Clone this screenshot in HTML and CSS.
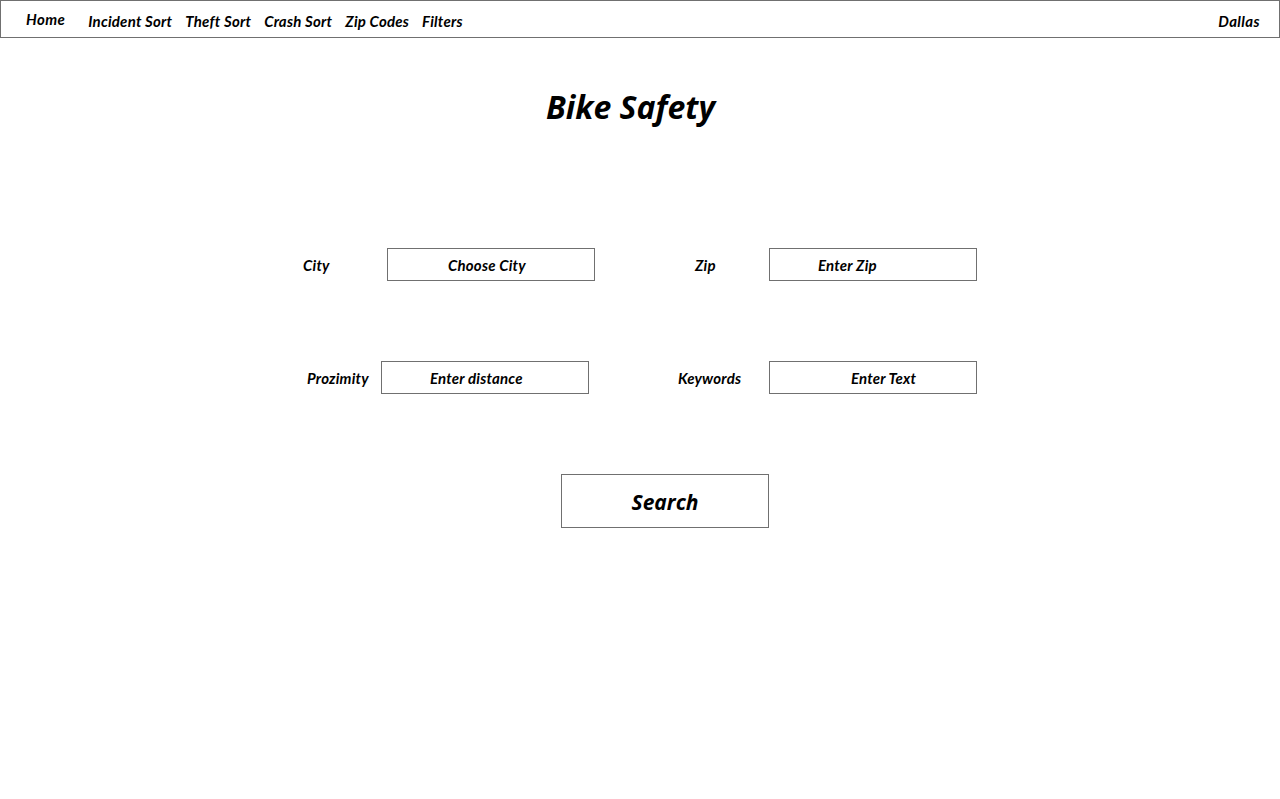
FILE: index.html
```html
<!DOCTYPE html>
<html lang="en">
<head>
<meta charset="utf-8">
<title>Bike Safety</title>
<link rel="stylesheet" href="styles.css">
</head>
<body>
<nav class="topbar">
  <a class="nav-home" href="#">Home</a>
  <ul class="nav-links">
    <li><a href="#">Incident Sort</a></li>
    <li><a href="#">Theft Sort</a></li>
    <li><a href="#">Crash Sort</a></li>
    <li><a href="#">Zip Codes</a></li>
    <li><a href="#">Filters</a></li>
  </ul>
  <span class="nav-city">Dallas</span>
</nav>

<main class="page">
  <h1 class="title">Bike Safety</h1>

  <form class="search-form">
    <div class="row row-1">
      <label class="label label-city">City</label>
      <div class="box box-city">Choose City</div>
      <label class="label label-zip">Zip</label>
      <div class="box box-zip">Enter Zip</div>
    </div>
    <div class="row row-2">
      <label class="label label-prox">Prozimity</label>
      <div class="box box-dist">Enter distance</div>
      <label class="label label-key">Keywords</label>
      <div class="box box-text">Enter Text</div>
    </div>
    <div class="row row-btn">
      <button type="button" class="search-btn">Search</button>
    </div>
  </form>
</main>
</body>
</html>
```

FILE: styles.css
```css
* { box-sizing: border-box; }

html, body {
  margin: 0;
  padding: 0;
  background: #ffffff;
  color: #000000;
}

body {
  width: 1280px;
  height: 799px;
  overflow: hidden;
  font-family: Lato, "Open Sans", sans-serif;
  font-weight: 700;
  font-style: italic;
}

a { color: #000; text-decoration: none; }

.topbar {
  height: 38px;
  border: 1px solid #707070;
  display: flex;
  align-items: center;
  padding: 3px 19px 0 25px;
  font-size: 15px;
  letter-spacing: 0.22px;
}

.nav-home {
  margin-top: -3px;
  letter-spacing: 0.4px;
}

.nav-links {
  list-style: none;
  display: flex;
  gap: 13px;
  margin: 0 0 0 23px;
  padding: 0;
}

.nav-city {
  margin-left: auto;
  letter-spacing: 0.4px;
}

.page {
  display: flex;
  flex-direction: column;
}

.title {
  margin: 47px 0 0 0;
  text-align: center;
  font-family: "Open Sans", sans-serif;
  font-size: 32px;
  font-weight: 700;
  font-style: italic;
  line-height: 44px;
  padding-right: 19px;
  letter-spacing: 0;
}

.search-form {
  display: flex;
  flex-direction: column;
}

.row {
  display: flex;
  align-items: center;
}

.row-1 { margin-top: 119px; }
.row-2 { margin-top: 80px; }
.row-btn { margin-top: 80px; padding-left: 561px; }

.label {
  font-size: 15px;
  letter-spacing: 0.2px;
}

.box {
  width: 208px;
  height: 33px;
  border: 1px solid #707070;
  font-size: 15px;
  letter-spacing: 0.2px;
  display: flex;
  align-items: center;
}

.label-city { margin-left: 303px; width: 84px; }
.box-city { padding-left: 60px; }

.label-zip { margin-left: 100px; width: 74px; }
.box-zip { padding-left: 48px; }

.label-prox { margin-left: 307px; width: 74px; }
.box-dist { padding-left: 48px; }

.label-key { margin-left: 89px; width: 91px; }
.box-text { padding-left: 81px; }

.search-btn {
  width: 208px;
  height: 54px;
  border: 1px solid #707070;
  background: #ffffff;
  font-family: "Open Sans", sans-serif;
  font-size: 21px;
  font-weight: 700;
  font-style: italic;
  color: #000;
  padding: 1px 0 0 0;
}
```
